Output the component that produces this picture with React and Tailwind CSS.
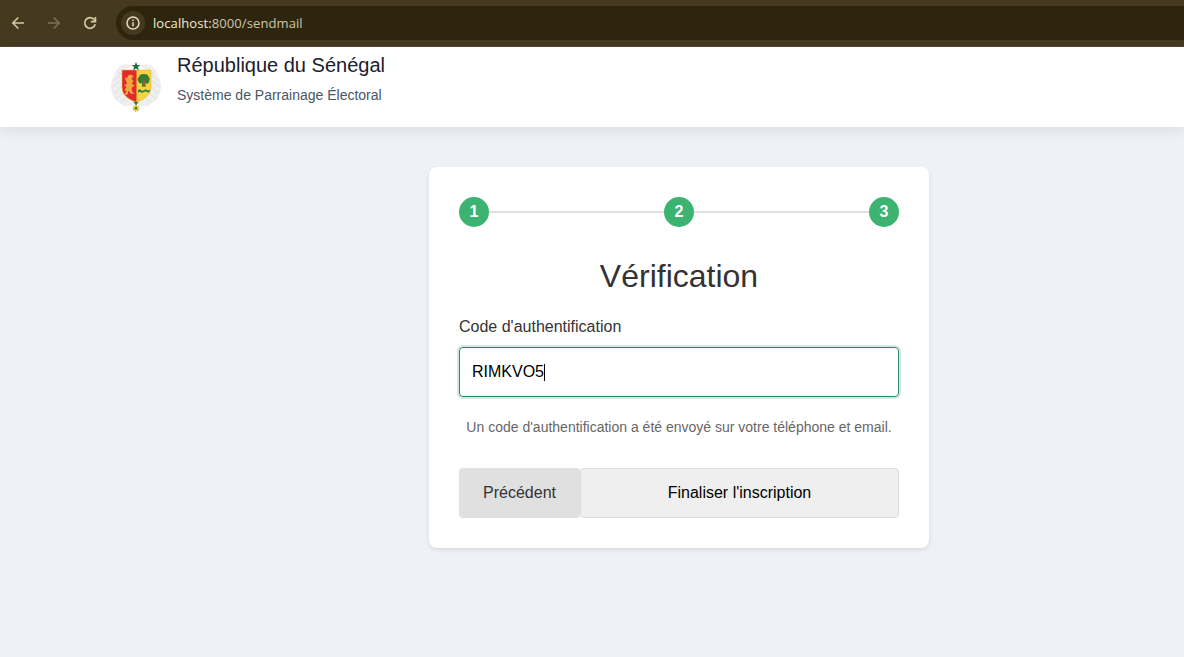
function BrowserBar() {
  return (
    <div className="flex h-[47px] items-center border-b border-[#514a38] bg-[#453a20]">
      <div className="flex w-[116px] shrink-0 items-center pl-[10px]">
        <svg width="16" height="16" viewBox="0 0 16 16" fill="none" stroke="#d9c9a1" strokeWidth="1.6">
          <path d="M14 8H3M8.300 2.500 2.800 8l5.500 5.500" />
        </svg>
        <svg className="ml-[20px]" width="16" height="16" viewBox="0 0 16 16" fill="none" stroke="#7d7155" strokeWidth="1.6">
          <path d="M2 8H13M7.700 2.500 13.200 8l-5.500 5.500" />
        </svg>
        <svg className="ml-[20px]" width="16" height="16" viewBox="0 0 16 16" fill="none" stroke="#d9c9a1" strokeWidth="1.7">
          <path d="M13.200 9.300A5.300 5.300 0 1 1 12.300 4.800L13.700 6.400" />
          <path d="M13.400 2v4.600H8.800" />
        </svg>
      </div>
      <div className="flex h-[34px] flex-1 items-center rounded-l-full bg-[#2e250e] pl-[5px]">
        <div className="flex size-6 items-center justify-center rounded-full bg-[#453a20]">
          <svg width="14" height="14" viewBox="0 0 14 14" fill="none" stroke="#e8dcc0" strokeWidth="1.5">
            <circle cx="7" cy="7" r="6" />
            <path d="M7 6.200v4M7 3.600v1.500" />
          </svg>
        </div>
        <span className="ml-2 font-['Open_Sans','Noto_Sans',sans-serif] text-[13px] leading-5 tracking-[0.09px] text-[#cfc5ab]">
          <span className="text-[#f3ead4]">localhost:</span>8000/sendmail
        </span>
      </div>
    </div>
  );
}

function CoatOfArms() {
  const shield = "M11 8H40V25c0 8-6 12-14.500 15.500C17 37 11 33 11 25z";
  return (
    <svg className="shrink-0" width="50" height="50" viewBox="0 0 50 50">
      <g fill="#efefef" stroke="#e2e2e2" strokeWidth="0.6">
        <path d="M20 4C13 1 7 4 5 11L1 19l-.5 6 1 6 3 6 5 4 5 3 7-1 3-2V30L13 8z" />
        <path d="M30 4c7-3 13 0 15 7l4 8 .5 6-1 6-3 6-5 4-5 3-7-1-3-2V30L37 8z" />
      </g>
      <g fill="none" stroke="#d9d9d9" strokeWidth="0.7">
        <path d="M3 19l6-6M2 25l7-6M3 31l7-6M6 36l6-5M10 40l5-4M7 10l5 3M47 19l-6-6M48 25l-7-6M47 31l-7-6M44 36l-6-5M40 40l-5-4M43 10l-5 3" />
      </g>
      <path d={shield} fill="#f7d342" />
      <path d="M11 8H25.500v32.500C17 37 11 33 11 25z" fill="#df2b2c" />
      <path
        d="M13.500 15l2.500 1.500 1-3 3-1 2.500 2-2 2 2 3-2 2 3 2-3 2.500 1 4 2 2-4-.5-2-3-1 4-3 .5 2-4-2-1 2-3-2.500-2 3-1-1-3z"
        fill="#f2a63d"
      />
      <path
        d="M27.500 19.500c-1.500-1-1-4 .5-4.500 0-2 2-3 4-3s5 0 5.500 2.500c1.500 1 1.500 4 .5 5 0 2-2 2.500-3 2h-1l1 3h-4.500l1-3H30c-1.500 0-2.500-1-2.500-2z"
        fill="#3f7a33"
      />
      <path d="M32 18.500h2v6h-2z" fill="#91602b" />
      <path d="M27 28q1.500-1.300 3 0t3 0 3 0 3-.8v2.400q-1.500 1.600-3 .4t-3 0-3 .4-3 0z" fill="#2c8747" />
      <path d={shield} fill="none" stroke="#e2b640" strokeWidth="0.6" />
      <path d="M25 0l1.200 3 3.300.1-2.600 2 .9 3.200L25 6.500l-2.800 1.800.9-3.200-2.600-2 3.300-.1z" fill="#17733f" />
      <path d="M22.500 40l2.500 3.500 2.500-3.500z" fill="#25884b" />
      <circle cx="25" cy="46.300" r="2.700" fill="#f1d151" stroke="#d9b33b" strokeWidth="1.400" strokeDasharray="1.200 .8" />
      <circle cx="25" cy="46.300" r="1.300" fill="#2c7d3e" />
    </svg>
  );
}

function Step({ n }) {
  return (
    <div className="flex size-[30px] items-center justify-center rounded-full bg-[#3cb371] text-base font-bold text-white">
      {n}
    </div>
  );
}

export default function App() {
  return (
    <div className="flex h-[657px] flex-col overflow-hidden bg-[#f0f1f6] font-['Liberation_Sans',Arial,sans-serif]">
      <BrowserBar />
      <header className="flex h-20 shrink-0 items-start bg-white pt-[5px] pl-[111px] shadow-[0_2px_15px_rgba(0,0,0,0.1)]">
        <div className="pt-[10px]">
          <CoatOfArms />
        </div>
        <div className="ml-4">
          <h1 className="text-xl leading-[26px] text-[#1a202c]">République du Sénégal</h1>
          <p className="mt-[6px] text-sm leading-[22px] text-[#4a5568]">Système de Parrainage Électoral</p>
        </div>
      </header>

      <main className="mt-10 ml-[429px] h-[381px] w-[500px] rounded-lg bg-white p-[30px] shadow-[0_2px_4px_rgba(0,0,0,0.1)]">
        <div className="flex items-center">
          <Step n={1} />
          <div className="h-0.5 flex-1 bg-[#e0e0e0]" />
          <Step n={2} />
          <div className="h-0.5 flex-1 bg-[#e0e0e0]" />
          <Step n={3} />
        </div>
        <h2 className="mt-[30px] text-center text-[32px] leading-[38px] text-[#333]">Vérification</h2>
        <label className="mt-5 block text-base leading-6 text-[#333]" htmlFor="code">
          Code d'authentification
        </label>
        <div
          id="code"
          className="mt-2 flex h-[50px] items-center rounded border border-[#2d8a68] px-3 text-base text-black shadow-[0_0_0_2px_rgba(45,138,104,0.2)]"
        >
          <span className="leading-6">RIMKVO5</span>
          <span className="h-[17px] w-px bg-black" />
        </div>
        <p className="mt-[19px] text-center text-sm leading-[22px] text-[#666]">
          Un code d'authentification a été envoyé sur votre téléphone et email.
        </p>
        <div className="mt-[30px] flex h-[50px]">
          <button className="w-[121px] rounded bg-[#e0e0e0] text-base text-[#333]">Précédent</button>
          <button className="flex-1 rounded border border-[#ddd] bg-[#efefef] text-base text-black">
            Finaliser l'inscription
          </button>
        </div>
      </main>
    </div>
  );
}
